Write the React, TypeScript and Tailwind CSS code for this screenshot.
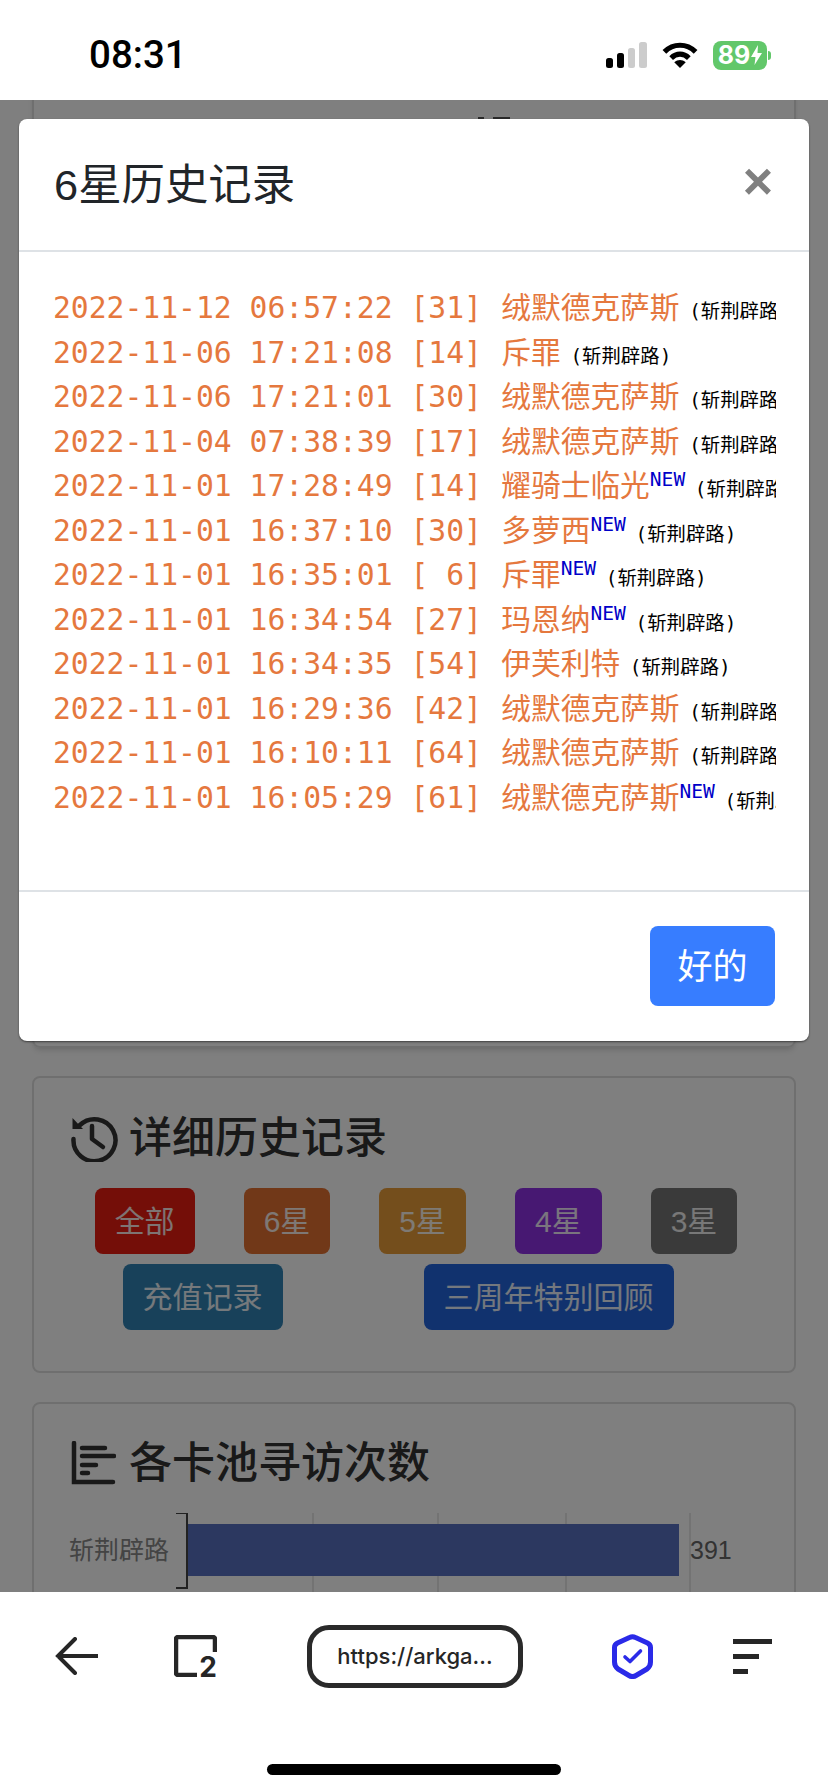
const mono = "font-['DejaVu_Sans_Mono','Noto_Sans_CJK_SC',monospace]";

const rows = [
  { time: "2022-11-12 06:57:22", pull: "[31]", name: "绒默德克萨斯", isNew: false },
  { time: "2022-11-06 17:21:08", pull: "[14]", name: "斥罪", isNew: false },
  { time: "2022-11-06 17:21:01", pull: "[30]", name: "绒默德克萨斯", isNew: false },
  { time: "2022-11-04 07:38:39", pull: "[17]", name: "绒默德克萨斯", isNew: false },
  { time: "2022-11-01 17:28:49", pull: "[14]", name: "耀骑士临光", isNew: true },
  { time: "2022-11-01 16:37:10", pull: "[30]", name: "多萝西", isNew: true },
  { time: "2022-11-01 16:35:01", pull: "[ 6]", name: "斥罪", isNew: true },
  { time: "2022-11-01 16:34:54", pull: "[27]", name: "玛恩纳", isNew: true },
  { time: "2022-11-01 16:34:35", pull: "[54]", name: "伊芙利特", isNew: false },
  { time: "2022-11-01 16:29:36", pull: "[42]", name: "绒默德克萨斯", isNew: false },
  { time: "2022-11-01 16:10:11", pull: "[64]", name: "绒默德克萨斯", isNew: false },
  { time: "2022-11-01 16:05:29", pull: "[61]", name: "绒默德克萨斯", isNew: true },
];

function StatusBar() {
  return (
    <div className="h-[100px] shrink-0 bg-white flex items-center justify-between pl-[89px] pr-[57px] pt-[10px]">
      <span className="font-['Roboto',sans-serif] font-medium text-[38.5px] leading-none text-black">08:31</span>
      <div className="flex items-center gap-[15px]">
        <svg width="41" height="26" viewBox="0 0 41 26">
          <rect x="0" y="16" width="7" height="10" rx="2.5" fill="#000" />
          <rect x="11" y="11" width="7" height="15" rx="2.5" fill="#000" />
          <rect x="22" y="6" width="7" height="20" rx="2.5" fill="#ccc" />
          <rect x="33" y="0" width="8" height="26" rx="2.5" fill="#ccc" />
        </svg>
        <svg width="36" height="26" viewBox="0 0 34 25" fill="none">
          <path d="M2 9.500C10.500 1 23.500 1 32 9.500" stroke="#000" strokeWidth="5" />
          <path d="M8.500 15.500C13.500 10.500 20.500 10.500 25.500 15.500" stroke="#000" strokeWidth="5" />
          <path d="M11.500 19.500C15 16.500 19 16.500 22.500 19.500L17 25Z" fill="#000" />
        </svg>
        <div className="flex items-center">
          <div className="w-[54px] h-[29px] rounded-[8px] bg-[#62c76a] flex items-center justify-center gap-[1px] text-white font-['Inter',sans-serif] font-bold text-[25px] leading-none">
            <span>89</span>
            <svg width="11" height="20" viewBox="0 0 11 20">
              <path d="M7 0L0 12H4.500L3.500 20L11 8H6.500Z" fill="#fff" />
            </svg>
          </div>
          <div className="w-[3px] h-[9px] ml-[1px] rounded-r-full bg-[#62c76a]" />
        </div>
      </div>
    </div>
  );
}

function FilterButton({ label, color }: { label: string; color: string }) {
  return (
    <div className={`h-[66px] px-5 rounded-[8px] flex items-center text-[30px] text-white/90 ${color}`}>{label}</div>
  );
}

function Background() {
  return (
    <div className="font-['Liberation_Sans','Noto_Sans_CJK_SC',sans-serif]">
      <div className="mx-[32px] -mt-[40px] h-[988px] rounded-[8px] border-2 border-[#dfdfdf] shadow-md pt-[55px] pl-[444px] flex items-start gap-[9px]">
        <div className="w-[6px] h-[2px] bg-[#555]" />
        <div className="w-[17px] h-[2px] bg-[#555]" />
      </div>

      <div className="mx-[32px] mt-[28px] h-[297px] rounded-[8px] border-2 border-[#dfdfdf] pt-[36px]">
        <div className="pl-[36px] flex items-center gap-[11px] text-[43px] leading-none font-medium text-[#333]">
          <svg width="48" height="48" viewBox="0 0 48 48" fill="none" stroke="#333" strokeWidth="4.5" strokeLinecap="round" strokeLinejoin="round">
            <path d="M3.500 25A21 21 0 1 0 10 11" />
            <path d="M2.500 4V15H13Z" fill="#333" stroke="none" />
            <path d="M22 12V25L33 33" />
          </svg>
          <span>详细历史记录</span>
        </div>
        <div className="mt-[26px] pl-[4px] flex justify-center gap-[49px]">
          <FilterButton label="全部" color="bg-[#e81c10]" />
          <FilterButton label="6星" color="bg-[#e27030]" />
          <FilterButton label="5星" color="bg-[#e89c38]" />
          <FilterButton label="4星" color="bg-[#8e30e4]" />
          <FilterButton label="3星" color="bg-[#747474]" />
        </div>
        <div className="mt-[10px] pr-[32px] flex justify-center gap-[141px]">
          <FilterButton label="充值记录" color="bg-[#3082b4]" />
          <FilterButton label="三周年特别回顾" color="bg-[#2264dc]" />
        </div>
      </div>

      <div className="mx-[32px] mt-[29px] h-[300px] rounded-[8px] border-2 border-[#dfdfdf] pt-[37px]">
        <div className="pl-[37px] flex items-center gap-[13px] text-[43px] leading-none font-medium text-[#333]">
          <svg width="45" height="44" viewBox="0 0 45 44" fill="none" stroke="#333" strokeWidth="4.5" strokeLinecap="round">
            <path d="M3 2V41H42" />
            <path d="M11 7H34M11 15H43M11 24H25M11 32H17" />
          </svg>
          <span>各卡池寻访次数</span>
        </div>
        <svg width="760" height="90" viewBox="0 0 760 90" className="mt-[28px]">
          <path d="M279 0V90M404 0V90M532 0V90M656 0V90" stroke="#e0e0e0" strokeWidth="1.500" />
          <rect x="153" y="11" width="492" height="52" fill="#5870c0" />
          <path d="M142 0H153V75H142" fill="none" stroke="#444" strokeWidth="2" />
          <text x="35" y="46" fontSize="25" fill="#888">斩荆辟路</text>
          <text x="656" y="46" fontSize="25" fill="#666">391</text>
        </svg>
      </div>
    </div>
  );
}

function HistoryModal() {
  return (
    <div className="absolute left-[19px] top-[19px] w-[790px] h-[922px] bg-white rounded-[8px] flex flex-col shadow-[0_1px_2px_rgba(0,0,0,0.5)] font-['Liberation_Sans','Noto_Sans_CJK_SC',sans-serif]">
      <div className="h-[133px] shrink-0 border-b-2 border-[#dee2e6] flex items-center justify-between pl-[35px] pr-[36px]">
        <span className="text-[43.4px] font-normal text-[#212529] leading-none mt-[3px]">6星历史记录</span>
        <span className="text-[52px] font-bold text-[#808080] leading-none -mt-[8px]">×</span>
      </div>
      <div className={`flex-1 pt-[34px] pl-[34px] pr-[33px] ${mono}`}>
        {rows.map((r) => (
          <div key={r.time} className="whitespace-nowrap overflow-hidden h-[44.5px] leading-[44.5px] text-[29.7px] text-[#e5783e]">
            <span>{r.time} {r.pull} </span>
            <span className="ml-[1.5px]">{r.name}</span>
            {r.isNew && <sup className="text-[19.6px] text-[#0000c8]">NEW</sup>}
            <span className="text-[19.4px] text-black -ml-[2px]"> (斩荆辟路)</span>
          </div>
        ))}
      </div>
      <div className="h-[151px] shrink-0 border-t-2 border-[#dee2e6] flex items-center justify-end pr-[34px] pb-[2px]">
        <div className="w-[125px] h-[80px] pt-[3px] rounded-[8px] bg-[#377dff] flex items-center justify-center text-white text-[35px]">好的</div>
      </div>
    </div>
  );
}

function BottomBar() {
  return (
    <div className="h-[200px] shrink-0 bg-white relative">
      <div className="h-[128px] flex items-center pl-[55px] font-['Inter',sans-serif]">
        <svg width="43" height="38" viewBox="0 0 43 38" fill="none" stroke="#262626" strokeWidth="4" strokeLinecap="round">
          <path d="M43 19H3M20 2L3 19L20 36" />
        </svg>
        <div className="relative w-[43px] h-[42px] ml-[76px]">
          <svg width="43" height="42" viewBox="0 0 43 42" fill="none" stroke="#262626" strokeWidth="4.500">
            <path d="M23 40H4C3 40 2 39 2 38V4C2 3 3 2 4 2H39C40 2 41 3 41 4V17" />
          </svg>
          <span className="absolute right-0 bottom-[-5px] text-[28px] leading-[30px] font-bold text-[#262626]">2</span>
        </div>
        <div className="ml-[90px] w-[216px] h-[63px] rounded-[22px] border-[5px] border-[#2a2a2a] flex items-center justify-center text-[22px] font-medium text-[#262626]">
          https://arkga...
        </div>
        <svg className="ml-[89px]" width="41" height="45" viewBox="0 0 41 45" fill="none" stroke="#2a2ae8" strokeLinecap="round" strokeLinejoin="round">
          <path d="M17.500 3.500C19.500 2.500 21.500 2.500 23.500 3.500L35.500 9C37.500 10 38.500 11.500 38.500 13.500V28C38.500 31 37.500 33 35 35L24 41.500C21.500 43 19.500 43 17 41.500L6 35C3.500 33 2.500 31 2.500 28V13.500C2.500 11.500 3.500 10 5.500 9Z" strokeWidth="5" />
          <path d="M13 23L18 27.500L28.500 17" strokeWidth="3.600" />
        </svg>
        <div className="ml-[80px] flex flex-col gap-[10px]">
          <div className="w-[39px] h-[5px] bg-[#262626]" />
          <div className="w-[26px] h-[5px] bg-[#262626]" />
          <div className="w-[15px] h-[5px] bg-[#262626]" />
        </div>
      </div>
      <div className="absolute bottom-[17px] left-[267px] w-[294px] h-[11px] rounded-full bg-black" />
    </div>
  );
}

export default function App() {
  return (
    <div className="w-[828px] h-[1792px] flex flex-col overflow-hidden bg-white">
      <StatusBar />
      <div className="relative flex-1 overflow-hidden">
        <Background />
        <div className="absolute inset-0 bg-black/50" />
        <HistoryModal />
      </div>
      <BottomBar />
    </div>
  );
}
